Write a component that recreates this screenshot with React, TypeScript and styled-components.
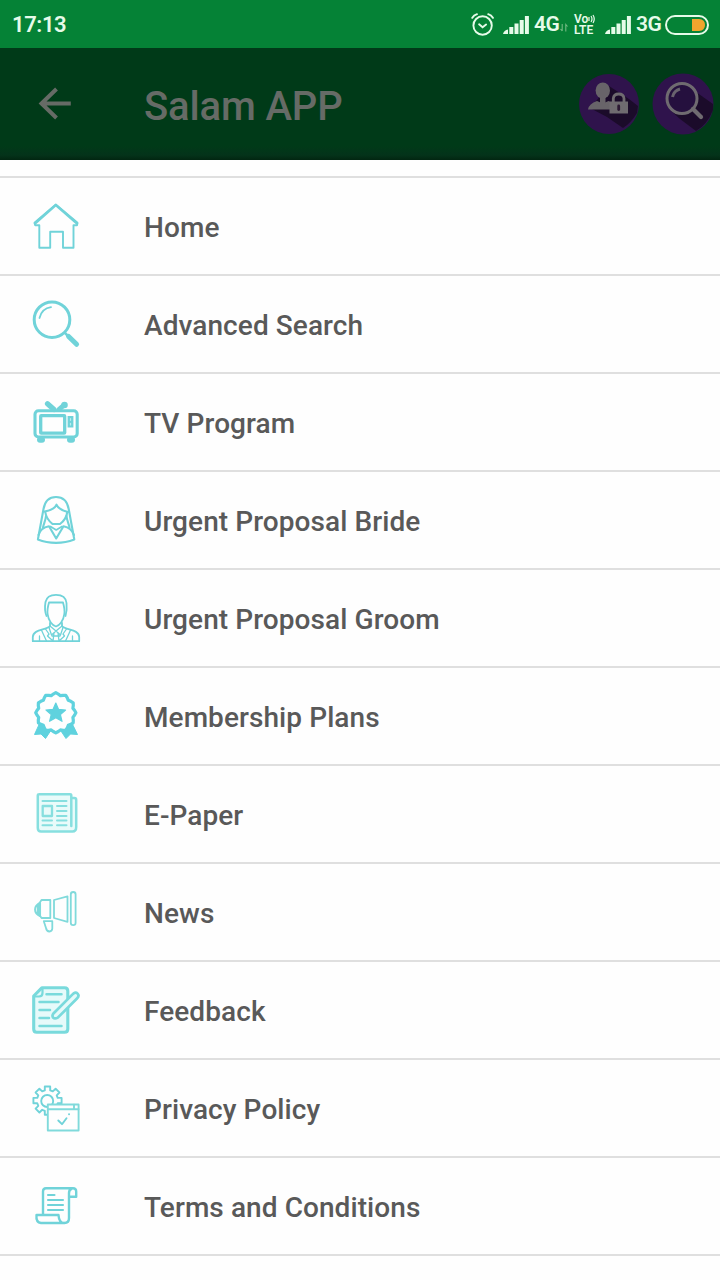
import React from "react";
import styled, { createGlobalStyle } from "styled-components";

const GlobalStyle = createGlobalStyle`
  * { box-sizing: border-box; }
  body { margin: 0; background: #fefefe; font-family: Roboto, "Liberation Sans", sans-serif; }
`;

const Screen = styled.div`
  width: 720px;
  height: 1280px;
  overflow: hidden;
  display: flex;
  flex-direction: column;
  background: #fefefe;
`;

const StatusBar = styled.header`
  height: 48px;
  flex: none;
  display: flex;
  align-items: center;
  justify-content: space-between;
  padding: 1px 11px 0 12px;
  background: #058236;
  color: #e6fbe9;
`;

const Clock = styled.span`
  font-size: 22px;
  line-height: 47px;
  font-weight: 600;
  letter-spacing: -0.4px;
`;

const StatusIcons = styled.div`
  display: flex;
  align-items: center;
  height: 47px;
`;

const StatusGlyph = styled.svg<{ $gap?: number }>`
  display: block;
  flex: none;
  margin-left: ${({ $gap = 0 }) => $gap}px;
`;

const Network = styled.span<{ $width: number }>`
  width: ${({ $width }) => $width}px;
  margin-left: 5px;
  font-size: 21px;
  line-height: 47px;
  font-weight: 600;
  letter-spacing: -0.6px;
`;

const Volte = styled.div`
  display: flex;
  flex-direction: column;
  width: 22px;
  margin-left: 6px;
  font-size: 12px;
  line-height: 12px;
  font-weight: 600;
`;

const VolteTop = styled.span`
  display: flex;
  align-items: center;
  height: 11px;
`;

const AppBar = styled.div`
  height: 112px;
  flex: none;
  display: flex;
  align-items: center;
  padding: 0 6px 0 32px;
  background: linear-gradient(#003a18 0, #003a18 98px, #04331a 107px, #022611 112px);
`;

const Title = styled.h1`
  flex: 1;
  margin: 5px 0 0 66px;
  font-size: 40px;
  line-height: 48px;
  font-weight: 500;
  letter-spacing: -0.15px;
  color: #666b66;
`;

const Actions = styled.div`
  display: flex;
  gap: 12px;
`;

const Menu = styled.nav`
  margin-top: 16px;
  border-top: 2px solid #dfdfdf;
`;

const MenuRow = styled.a`
  display: flex;
  align-items: center;
  height: 98px;
  padding-left: 32px;
  border-bottom: 2px solid #dfdfdf;
`;

const MenuIcon = styled.svg`
  width: 48px;
  height: 48px;
  flex: none;
  overflow: visible;
  fill: none;
  stroke: #70d3d9;
  stroke-width: 2.4;
  stroke-linecap: round;
  stroke-linejoin: round;
`;

const Label = styled.span`
  margin: 2px 0 0 64px;
  font-size: 28px;
  line-height: 37px;
  font-weight: 500;
  letter-spacing: 0.08px;
  color: #595959;
`;

const Signal = ({ gap }: { gap: number }) => (
  <StatusGlyph $gap={gap} width="26" height="20" viewBox="0 0 26 20" fill="#e6fbe9">
    <path d="M0 19 Q1 15 5 14.5V19Z" />
    <rect x="6.3" y="12" width="4" height="7" />
    <rect x="11.5" y="8.5" width="4" height="10.5" />
    <rect x="16.7" y="5" width="4" height="14" />
    <rect x="21.9" y="1" width="4" height="18" />
  </StatusGlyph>
);

const badge = Array.from({ length: 48 }, (_, i) => {
  const a = (i / 48) * Math.PI * 2 - Math.PI / 2;
  const r = 18.9 + 1.2 * Math.cos((i / 4) * Math.PI * 2);
  return `${(23.8 + r * Math.cos(a)).toFixed(1)},${(20.8 + r * Math.sin(a)).toFixed(1)}`;
}).join(" ");

const gear = Array.from({ length: 8 }, (_, i) => {
  const step = (offset: number, r: number) => {
    const a = ((i * 45 + offset - 90) * Math.PI) / 180;
    return `${(15.5 + r * Math.cos(a)).toFixed(1)},${(16.6 + r * Math.sin(a)).toFixed(1)}`;
  };
  return [step(-15, 10.6), step(-11, 14.4), step(11, 14.4), step(15, 10.6)].join(" ");
}).join(" ");

const items: { label: string; icon: React.ReactNode }[] = [
  {
    label: "Home",
    icon: (
      <>
        <path d="M2.5 20.8 23.8 2.5 45.5 20.8 45 23.2H41.5V45.7H31V29.8H18.2V45.7H7.3V23.2H3.2Z" strokeWidth="1.9" />
        <path d="M3 21.5 23.8 3.2 45 21.5" />
      </>
    ),
  },
  {
    label: "Advanced Search",
    icon: (
      <>
        <circle cx="20" cy="19.7" r="17.8" strokeWidth="3" />
        <path d="M7.5 18C9 12 13 8 19 7.2" strokeWidth="1.8" />
        <path d="M33 33 36 36" strokeWidth="2.5" />
        <path d="M36.6 36.5 44.6 44.3" strokeWidth="5" />
      </>
    ),
  },
  {
    label: "TV Program",
    icon: (
      <>
        <rect x="3" y="12.7" width="42.2" height="26.3" rx="3.5" strokeWidth="3.1" />
        <rect x="8.7" y="17.7" width="24" height="17.5" rx=".5" strokeWidth="3.3" />
        <rect x="35.6" y="18" width="5.8" height="11.5" fill="#70d3d9" stroke="none" />
        <path d="M38.5 20.5V22.3M38.5 25.3V27" stroke="#b9edef" strokeWidth="1.2" />
        <path d="M15.5 5.7 22 11.5" strokeWidth="5.2" />
        <path d="M32 7.2 27 11.3" strokeWidth="4.8" />
        <circle cx="32.5" cy="7" r="1.8" strokeWidth="3" />
        <path d="M8 41.8H10M38 41.8H40" strokeWidth="6" />
      </>
    ),
  },
  {
    label: "Urgent Proposal Bride",
    icon: (
      <g strokeWidth="2.1">
        <path d="M5.9 43.5 11.5 13C13 4.5 17 1 24 1S35.2 4.5 36.7 13L42.3 43.5C31 48 17 48 5.9 43.5Z" />
        <path d="M12.5 15.5C19 14.5 23 12 24.5 8.7C26.5 13 30 14.5 36 16" />
        <path d="M13.3 16C14 22 17.5 25.5 20.5 28H28C31.5 25.5 34.5 22 35.3 16" />
        <path d="M14 20C13.5 25 11.8 27 11 31.5M34.5 20C35 25 36.7 27 37.5 31.5" />
        <path d="M6.5 39C8 33 12 31.2 17 30.2L24.2 42.5 31.5 30.2C36.5 31.2 40 33 42 39" />
        <path d="M18.5 30.5 24.2 34 30 30.5" strokeWidth="1.7" />
      </g>
    ),
  },
  {
    label: "Urgent Proposal Groom",
    icon: (
      <g strokeWidth="1.8">
        <path d="M14.5 22C12.5 17 13 11 13.5 8C14.5 3 18 .8 24 .8C31 .8 34 3.5 34.5 9C35 14 34.8 18 33.5 22" />
        <path d="M15.6 20C15 16 16 12 17 8.5H31C32 12 33 16 32.3 20C31.5 27 27.5 31.5 24 32.5C20.3 31.5 16.5 27 15.6 20Z" />
        <path d="M18 29V32.2C14 36.5 1.2 35 .8 43V47.2H47.2V43C46.8 35 34 36.5 30 32.2V29" />
        <path d="M18 32 24 37 30 32M17 33.5 19.5 41 24 37 28.5 41 31 33.5M9.5 36.2 14.5 47M38.5 36.2 33.5 47M13.5 35 17 40 15.5 42 21 47M34.5 35 31 40 32.5 42 27 47M22 39 21 47M26 39 27 47M20 42H28M7.5 42V47M40.5 42V47" strokeWidth="1.3" />
      </g>
    ),
  },
  {
    label: "Membership Plans",
    icon: (
      <g stroke="#5fd2de">
        <path d="M8 30.5 2.5 42.5 9 42 13.5 46.5 19.5 37.5ZM39.6 30.5 45.5 42.5 38.5 42 34 46.5 28 37.5Z" fill="#5fd2de" strokeWidth="1" />
        <polygon points={badge} fill="#fefefe" strokeWidth="3.2" />
        <path d="M23.8 11 26.6 17.4 33.6 18 28.4 22.6 30 29.3 23.8 25.7 17.6 29.3 19.2 22.6 14 18 21 17.4Z" fill="#5fd2de" strokeWidth="1.2" />
      </g>
    ),
  },
  {
    label: "E-Paper",
    icon: (
      <g stroke="#87dfdf">
        <path d="M40.5 8H42.5Q44.2 8 44.2 10V37Q44.2 41.5 40.5 41.5H9Q5.8 41.5 5.8 38V5.5Q5.8 4.3 7.5 4.3H38Q39.3 4.3 39.3 5.5V36" fill="#e9fbfa" strokeWidth="2.5" />
        <path d="M10.5 11H34.5M25 16H34.5M25 21H34.5M25 26H34.5M10.5 30.5H20M25 30.5H34.5M10.5 35.3H20M25 35.3H34.5" strokeWidth="2" />
        <rect x="10.7" y="16" width="9.3" height="10" strokeWidth="2.3" />
      </g>
    ),
  },
  {
    label: "News",
    icon: (
      <g stroke="#80dadb" strokeWidth="1.8">
        <path d="M9.5 12H18.3V30H9.5L7.5 27V15Z" />
        <path d="M8 15C1.5 18 1.5 25 8 28ZM6 17V26" strokeWidth="2.1" />
        <path d="M22 12 35.5 8.3V33.8L22 30Z" />
        <rect x="38.8" y="4" width="4.8" height="33.2" rx="2.4" />
        <path d="M11.8 33.2H20.3V40.5Q20.2 43.2 17.4 43.5Q14.5 43.3 14 40Z" />
      </g>
    ),
  },
  {
    label: "Feedback",
    icon: (
      <g stroke="#79dadc">
        <path d="M9.8 1.8H32.6Q35.8 1.8 35.8 5V43Q35.8 46.3 32.5 46.3H4.7Q1.7 46.3 1.7 43V10Z" fill="#e6fafa" strokeWidth="3.1" />
        <path d="M2 10.5H7Q10.5 10.5 10.5 7V2" strokeWidth="2.2" />
        <path d="M14.5 8.2H29.5M7.5 16H26.5M7.5 24H18M7.5 32H17M7.5 40H29.5" strokeWidth="2.5" />
        <path d="M21.2 27.8 40.5 8.4Q43.3 5.3 45.6 7.6Q47.7 9.7 45 12.5L25.8 31.6Q22.8 33.3 21 31.5Q19.9 29.7 21.2 27.8Z" fill="#e6fafa" strokeWidth="2.7" />
      </g>
    ),
  },
  {
    label: "Privacy Policy",
    icon: (
      <g strokeWidth="1.9">
        <polygon points={gear} />
        <circle cx="15.2" cy="17" r="6" />
        <rect x="15.8" y="20.5" width="30.8" height="26" fill="#fefefe" stroke="#80dadb" />
        <path d="M16 25.3H46.5M42 20.8V25" stroke="#80dadb" />
        <path d="M26.3 36.5 30 40.2 34.5 34.2" />
        <path d="M37 30.2H37.1" />
      </g>
    ),
  },
  {
    label: "Terms and Conditions",
    icon: (
      <>
        <path d="M11 32.2V9.5Q11 6.2 14 6.2H41Q44.2 6.2 44.2 9.5V14.8H37V11Q37 7.5 40 6.5M37 14.5V36Q37 41 32.5 41" />
        <path d="M4.5 33H26.5Q27 40.8 32 41H9Q3.8 40.5 4.5 33Z" />
        <path d="M16 13H22.5M16 18H31M16 23H31M16 28H31" strokeWidth="2.1" />
      </>
    ),
  },
];

export default function App() {
  return (
    <Screen>
      <GlobalStyle />
      <StatusBar>
        <Clock>17:13</Clock>
        <StatusIcons>
          <StatusGlyph width="24" height="24" viewBox="0 0 24 24" fill="none" stroke="#e6fbe9" strokeWidth="1.9" strokeLinecap="round">
            <circle cx="12.6" cy="12.5" r="9.2" />
            <path d="M2.3 4.8Q3.8 2.1 7 1.2M22.9 4.8Q21.4 2.1 18.2 1.2M9.1 11.3 12.6 14.3 16.1 11.5" />
          </StatusGlyph>
          <Signal gap={9} />
          <Network $width={25}>4G</Network>
          <StatusGlyph $gap={1} width="8" height="17" viewBox="0 0 8 17" fill="none" stroke="#72ba83" strokeWidth="1.1">
            <path d="M2.2 8V15M.5 13 2.2 15M5.8 15.5V8.5L7.5 10.5" />
          </StatusGlyph>
          <Volte>
            <VolteTop>
              Vo
              <StatusGlyph width="7" height="10" viewBox="0 0 7 10" fill="none" stroke="#e6fbe9" strokeWidth="1.2">
                <path d="M1 3V7M3 2Q5 5 3 8M5 1Q7.5 5 5 9" />
              </StatusGlyph>
            </VolteTop>
            <span>LTE</span>
          </Volte>
          <Signal gap={9} />
          <Network $width={25}>3G</Network>
          <StatusGlyph $gap={4} width="44" height="20" viewBox="0 0 44 20">
            <rect x="1" y="1" width="42" height="18" rx="9" fill="none" stroke="#e6fbe9" strokeWidth="2" />
            <path d="M27 4H34Q40 4.5 40 10T34 16H27Z" fill="#f0a52e" />
          </StatusGlyph>
        </StatusIcons>
      </StatusBar>
      <AppBar>
        <svg width="46" height="40" viewBox="0 0 46 40" fill="none" stroke="#666b66" strokeWidth="4">
          <path d="M8.5 19.5H38.8M24.5 5 9.5 19.5 24.5 34" />
        </svg>
        <Title>Salam APP</Title>
        <Actions>
          <svg width="62" height="64" viewBox="0 0 62 64">
            <circle cx="31" cy="32" r="30" fill="#2f134c" />
            <path d="M12 36 29 45 45 56Q53 51 59 41L60 34 51 27 31 14Z" fill="#1b0b2a" />
            <ellipse cx="24.8" cy="18.5" rx="7.2" ry="8" fill="#686469" />
            <path d="M10 37.5Q11 31.5 19 29L24.8 31.5 30.5 29Q36 31 36 37.5H10Z" fill="#686469" />
            <path d="M22 25H27.5V33H22Z" fill="#686469" />
            <path d="M31.5 29.5H50V41.5H31.5Z" fill="#6f6b70" />
            <path d="M35.3 30V26.5Q35.8 22 40.7 22T46 26.5V30" fill="none" stroke="#6f6b70" strokeWidth="2.8" />
            <path d="M40.7 34V37.5" stroke="#2b1833" strokeWidth="2.8" strokeLinecap="round" />
          </svg>
          <svg width="62" height="64" viewBox="0 0 62 64">
            <circle cx="31" cy="32" r="30.5" fill="#2f134c" />
            <path d="M17 37 28 47 44 59Q55 53 61 38L61 32 44 20Z" fill="#1b0b2a" />
            <circle cx="30" cy="26.5" r="15" fill="#25103e" stroke="#6f6b70" strokeWidth="3" />
            <path d="M20.5 25Q22 18.5 28 17" fill="none" stroke="#69636e" strokeWidth="3" />
            <path d="M41 37 49 45" stroke="#6f6b70" strokeWidth="4.2" strokeLinecap="round" />
          </svg>
        </Actions>
      </AppBar>
      <Menu>
        {items.map(({ label, icon }) => (
          <MenuRow key={label}>
            <MenuIcon viewBox="0 0 48 48">{icon}</MenuIcon>
            <Label>{label}</Label>
          </MenuRow>
        ))}
      </Menu>
    </Screen>
  );
}
